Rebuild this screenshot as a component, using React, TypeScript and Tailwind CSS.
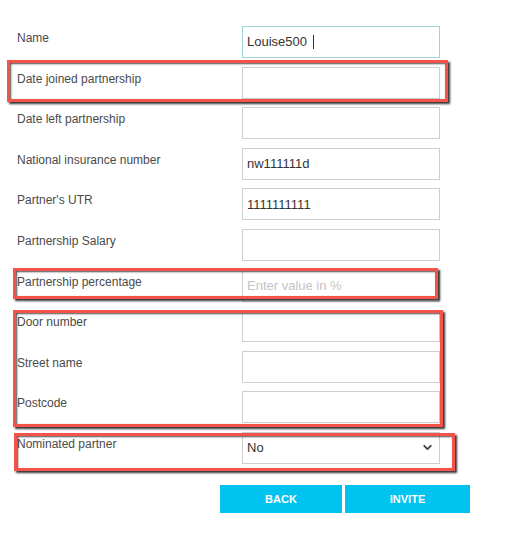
import { ChevronDown } from "lucide-react";

type Row = { label: string; value?: string; placeholder?: string; focused?: boolean; select?: boolean };

const rows: Row[] = [
  { label: "Name", value: "Louise500", focused: true },
  { label: "Date joined partnership" },
  { label: "Date left partnership" },
  { label: "National insurance number", value: "nw111111d" },
  { label: "Partner's UTR", value: "1111111111" },
  { label: "Partnership Salary" },
  { label: "Partnership percentage", placeholder: "Enter value in %" },
  { label: "Door number" },
  { label: "Street name" },
  { label: "Postcode" },
  { label: "Nominated partner", value: "No", select: true },
];

// red annotation boxes drawn over the form
const marks = [
  "left-[7px] top-[60px] w-[441px] h-[42px]",
  "left-[13px] top-[268px] w-[425px] h-[31px]",
  "left-[13px] top-[310px] w-[430px] h-[117px]",
  "left-[14px] top-[433px] w-[441px] h-[38px]",
];

function Field({ row }: { row: Row }) {
  const border = row.focused ? "border-[#9fd3dc]" : "border-[#cfcfcf]";
  return (
    <div className={`flex items-center h-[32px] w-[198px] border ${border} bg-white px-[4px] text-[13px] text-[#333]`}>
      {row.value && <span>{row.value}</span>}
      {row.focused && <span className="ml-[6px] h-[14px] w-px bg-[#333]" />}
      {row.placeholder && <span className="text-[#c4c4c4]">{row.placeholder}</span>}
      {row.select && <ChevronDown className="ml-auto mr-[1px] text-[#444]" size={13} strokeWidth={3.5} />}
    </div>
  );
}

export default function App() {
  return (
    <div className="relative w-[522px] h-[535px] bg-white font-['Liberation_Sans',Arial,sans-serif]">
      <div className="flex flex-col gap-[8.6px] pl-[17px] pt-[26px]">
        {rows.map((row) => (
          <div key={row.label} className="flex">
            <div className="w-[225px] pt-[4px] text-[12px] leading-[16px] text-[#4a4a4a]">{row.label}</div>
            <Field row={row} />
          </div>
        ))}
      </div>

      <div className="flex gap-[3px] pl-[220px] pt-[21px]">
        <button className="h-[28px] w-[122px] bg-[#00c3ef] text-[11px] font-bold text-white">BACK</button>
        <button className="h-[28px] w-[125px] bg-[#00c3ef] text-[11px] font-bold text-white">INVITE</button>
      </div>

      {marks.map((m) => (
        <div
          key={m}
          className={`absolute ${m} border-[3px] border-[#f5534a] shadow-[2px_2px_2px_rgba(0,0,0,0.8),inset_1px_1px_2px_rgba(0,0,0,0.7)]`}
        />
      ))}
    </div>
  );
}
